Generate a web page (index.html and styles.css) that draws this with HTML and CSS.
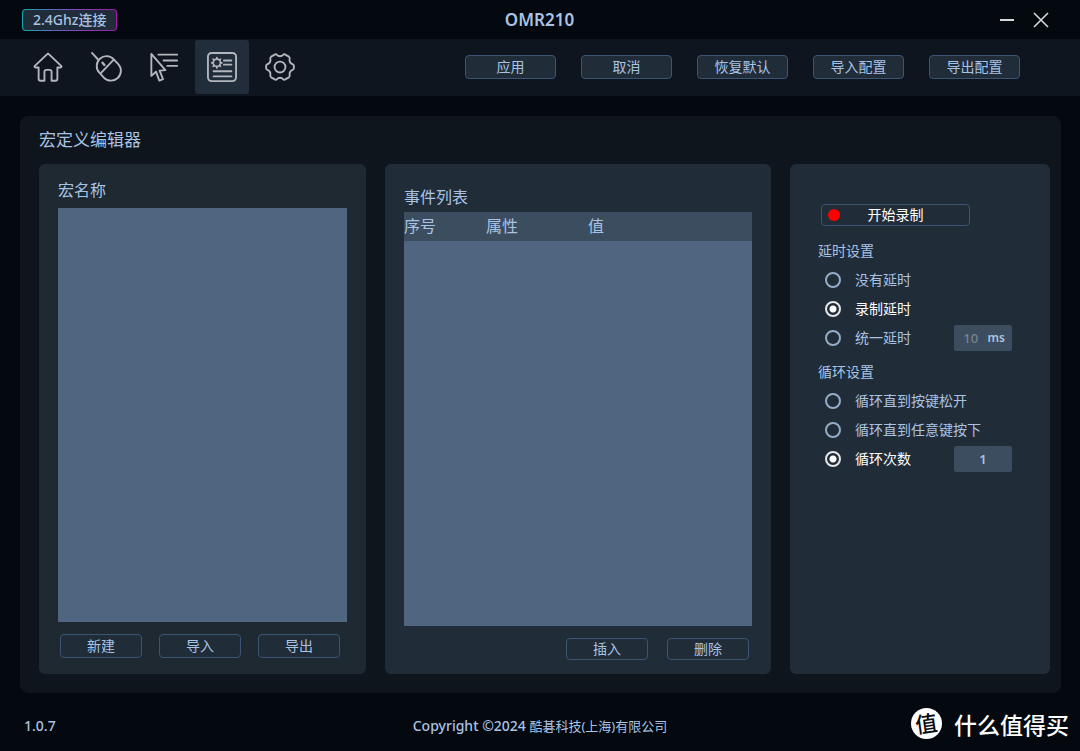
FILE: index.html
```html
<!DOCTYPE html>
<html lang="zh-CN">
<head>
<meta charset="utf-8">
<title>OMR210</title>
<link rel="stylesheet" href="styles.css">
</head>
<body>
<header class="titlebar">
  <div class="side"><span class="link-badge">2.4Ghz连接</span></div>
  <h1 class="product">OMR210</h1>
  <div class="side window-controls">
    <button class="window-button" type="button" aria-label="最小化"><svg width="16" height="16" viewBox="0 0 16 16"><path d="M1 8H15" stroke-width="2"/></svg></button>
    <button class="window-button" type="button" aria-label="关闭"><svg width="16" height="16" viewBox="0 0 16 16"><path d="M1 1 15 15M15 1 1 15" stroke-width="1.600"/></svg></button>
  </div>
</header>

<div class="toolbar">
  <nav class="tabs">
    <button class="tab" type="button" aria-label="主页"><svg width="30" height="30" viewBox="0 0 32 32"><path d="M16 1.500 2 14.800c-.8.900-.4 1.700.6 1.700H6v12c0 1.500.7 2.200 2.200 2.200h4V21c0-1.300.7-2 2-2h3.600c1.300 0 2 .7 2 2v9.700h4c1.500 0 2.200-.7 2.200-2.200v-12h3.400c1 0 1.400-.8.600-1.700Z"/></svg></button>
    <button class="tab" type="button" aria-label="鼠标"><svg width="30" height="30" viewBox="0 0 32 32"><path d="M1 1 7.500 8"/><rect x="8.500" y="3.500" width="21" height="28" rx="10.500" transform="rotate(-43 19 17.500)"/><path d="M10.500 22.500 24 8.500"/><path d="M12.300 11.500 14.300 13.800" stroke-width="2.600"/></svg></button>
    <button class="tab" type="button" aria-label="指针"><svg width="30" height="30" viewBox="0 0 32 32"><path d="M2.500 2v23.500l5-4.500 3.500 9.500 4-1.500-3.700-9.200 6.200-.5Z"/><path d="M10 2.800h20M15.500 9h14.500M19.500 14.800h10.500"/></svg></button>
    <button class="tab active" type="button" aria-label="宏定义" aria-current="page"><svg width="30" height="30" viewBox="0 0 32 32"><rect x="1" y="1" width="30" height="30" rx="4"/><circle cx="10.500" cy="11.500" r="3.900" stroke-width="1.800"/><path d="M10.500 6v1.500M10.500 15.500v1.500M5 11.500h1.500M14.500 11.500h1.500M6.600 7.600l1 1M13.400 14.400l1 1M14.400 7.600l-1 1M7.600 14.400l-1 1" stroke-width="1.800"/><path d="M18 9h8M18 13.500h8M7 20.500h19M7 26h19"/></svg></button>
    <button class="tab" type="button" aria-label="设置"><svg width="30" height="30" viewBox="0 0 32 32"><path d="M10 3c1-.8 2-.8 2.700.1 1.800 1.900 4.800 1.900 6.600 0C20 2.200 21 2.200 22 3l3.500 2c.7.500.9 1.200.8 2-.6 3.100 1 5.300 3.500 6.300.7.300 1 .8 1 1.700v2c0 .9-.3 1.400-1 1.700-2.500 1-4.100 3.200-3.500 6.300.1.800-.1 1.500-.8 2L22 29c-1 .8-2 .8-2.700-.1-1.800-1.900-4.800-1.900-6.600 0-.7.900-1.700.9-2.700.1L6.500 27c-.7-.5-.9-1.200-.8-2 .6-3.100-1-5.300-3.500-6.300-.7-.3-1-.8-1-1.700v-2c0-.9.300-1.400 1-1.700 2.500-1 4.100-3.200 3.500-6.300-.1-.8.100-1.500.8-2Z"/><circle cx="16" cy="16" r="5.800"/></svg></button>
  </nav>
  <div class="profile-actions">
    <button class="button" type="button">应用</button>
    <button class="button" type="button">取消</button>
    <button class="button" type="button">恢复默认</button>
    <button class="button" type="button">导入配置</button>
    <button class="button" type="button">导出配置</button>
  </div>
</div>

<main class="editor">
  <h2 class="editor-title">宏定义编辑器</h2>
  <div class="panels">
    <section class="panel macros">
      <h3 class="panel-title">宏名称</h3>
      <div class="list"></div>
      <div class="macro-actions">
        <button class="button" type="button">新建</button>
        <button class="button" type="button">导入</button>
        <button class="button" type="button">导出</button>
      </div>
    </section>

    <section class="panel events">
      <h3 class="panel-title">事件列表</h3>
      <div class="list">
        <table class="event-table">
          <thead><tr><th class="col-index">序号</th><th class="col-kind">属性</th><th>值</th></tr></thead>
        </table>
      </div>
      <div class="event-actions">
        <button class="button" type="button">插入</button>
        <button class="button" type="button">删除</button>
      </div>
    </section>

    <section class="panel options">
      <button class="button record" type="button"><span class="record-dot"></span>开始录制</button>
      <fieldset class="group">
        <legend class="group-title">延时设置</legend>
        <div class="row"><label class="choice"><input type="radio" name="delay">没有延时</label></div>
        <div class="row"><label class="choice"><input type="radio" name="delay" checked>录制延时</label></div>
        <div class="row">
          <label class="choice"><input type="radio" name="delay">统一延时</label>
          <span class="field"><input class="number" type="text" value="10" aria-label="统一延时" disabled><span class="unit">ms</span></span>
        </div>
      </fieldset>
      <fieldset class="group">
        <legend class="group-title">循环设置</legend>
        <div class="row"><label class="choice"><input type="radio" name="loop">循环直到按键松开</label></div>
        <div class="row"><label class="choice"><input type="radio" name="loop">循环直到任意键按下</label></div>
        <div class="row">
          <label class="choice"><input type="radio" name="loop" checked>循环次数</label>
          <span class="field"><input class="number" type="text" value="1" aria-label="循环次数"></span>
        </div>
      </fieldset>
    </section>
  </div>
</main>

<footer class="footer">
  <span class="version">1.0.7</span>
  <span>Copyright ©2024 <span class="company">酷碁科技(上海)有限公司</span></span>
  <div class="brand">
    <span class="brand-mark"><span class="brand-glyph">值</span></span>
    <span>什么值得买</span>
  </div>
</footer>
</body>
</html>
```
FILE: styles.css
```css
* { box-sizing: border-box; }

body {
  margin: 0;
  min-height: 100vh;
  display: flex;
  flex-direction: column;
  background: #04080f;
  color: #a9c3e3;
  font-family: "Noto Sans", "Noto Sans CJK SC", sans-serif;
  font-size: 14px;
  line-height: 20px;
}

h1, h2, h3 { margin: 0; font-weight: 400; }

button, input { font: inherit; color: inherit; }

svg {
  display: block;
  overflow: visible;
  fill: none;
  stroke: #b3b6bc;
  stroke-width: 2;
  stroke-linecap: round;
  stroke-linejoin: round;
}

.titlebar {
  display: grid;
  grid-template-columns: 1fr auto 1fr;
  align-items: center;
  height: 39px;
  padding: 0 23px 0 22px;
}

.side { display: flex; }

.link-badge {
  padding: 0 10px;
  border: 1px solid transparent;
  border-radius: 4px;
  background:
    linear-gradient(#202c3a, #202c3a) padding-box,
    linear-gradient(90deg, #16a5ac, #7a4fc0 50%, #a418a4) border-box;
  font-weight: 500;
}

.product {
  font-size: 17px;
  font-weight: 600;
  line-height: 24px;
}

.window-controls { justify-content: flex-end; gap: 2px; }

.window-button {
  padding: 8px;
  border: 0;
  background: none;
}

.window-button svg { stroke: #d5d7da; stroke-linecap: butt; }

.toolbar {
  display: flex;
  align-items: center;
  justify-content: space-between;
  height: 57px;
  padding: 0 60px 1px 21px;
  background: #0e151e;
}

.tabs { display: flex; gap: 4px; }

.tab {
  display: grid;
  place-items: center;
  width: 54px;
  height: 54px;
  padding: 0;
  border: 0;
  border-radius: 3px;
  background: none;
}

.tab.active { background: #212d3a; }

.profile-actions { display: flex; gap: 25px; }
.profile-actions .button { width: 91px; }

.button {
  height: 24px;
  padding: 0;
  border: 1px solid #3a5473;
  border-radius: 4px;
  background: #212c39;
  line-height: 20px;
}

.editor {
  flex: 1;
  display: flex;
  flex-direction: column;
  margin: 20px 19px 0 20px;
  padding: 12px 11px 19px 19px;
  border-radius: 8px;
  background: #0e151c;
}

.editor-title {
  margin-bottom: 12px;
  font-size: 17px;
  line-height: 24px;
}

.panels {
  flex: 1;
  display: grid;
  grid-template-columns: 327fr 386fr 260fr;
  gap: 19px;
}

.panel {
  display: flex;
  flex-direction: column;
  border-radius: 6px;
  background: #212c39;
}

.panel-title { font-size: 16px; line-height: 24px; }

.list { flex: 1; background: #4f6580; }

.macros { padding: 14px 19px 16px; background: #1e2932; }
.macros .panel-title { margin-bottom: 6px; }

.macro-actions { display: flex; gap: 17px; padding: 12px 2px 0; }
.macro-actions .button, .event-actions .button { width: 82px; }

.events { padding: 21px 19px 14px; }
.events .panel-title { margin-bottom: 3px; }

.event-table {
  width: 100%;
  border-collapse: collapse;
  table-layout: fixed;
  background: #3b4d5e;
  font-size: 16px;
  line-height: 29px;
  text-align: left;
}

.event-table th { padding: 0; font-weight: 400; }
.event-table .col-index { width: 82px; }
.event-table .col-kind { width: 102px; }

.event-actions {
  display: flex;
  justify-content: flex-end;
  gap: 19px;
  padding: 12px 3px 0 0;
}

.event-actions .button { height: 22px; }

.options { padding: 40px 38px 14px 28px; }

.record {
  display: grid;
  grid-template-columns: 24px 1fr 24px;
  align-items: center;
  width: 149px;
  height: 22px;
  margin: 0 0 10px 3px;
  color: #fff;
}

.record-dot {
  width: 12px;
  height: 12px;
  margin-left: 6px;
  border-radius: 50%;
  background: #f00;
}

.group { margin: 0 0 5px; padding: 0; border: 0; min-width: 0; }
.group-title { padding: 0; line-height: 29px; }

.row {
  display: flex;
  align-items: center;
  justify-content: space-between;
  height: 29px;
  padding-left: 7px;
}

.choice { display: flex; align-items: center; gap: 14px; }
.choice:has(:checked) { color: #fff; }

.choice input {
  appearance: none;
  width: 16px;
  height: 16px;
  margin: 0;
  border: 2px solid #93acc8;
  border-radius: 50%;
}

.choice input:checked {
  border-color: #e4e6e8;
  background: radial-gradient(circle, #fff 3px, transparent 4px);
}

.field {
  display: flex;
  align-items: center;
  width: 58px;
  height: 26px;
  border-radius: 2px;
  background: #3b4d5e;
}

.number {
  flex: 1;
  min-width: 0;
  padding: 0;
  border: 0;
  background: none;
  font-size: 13px;
  font-weight: 600;
  text-align: center;
}

.number:disabled { font-weight: 500; color: #77838d; }
.unit { padding-right: 7px; font-size: 12px; font-weight: 600; }

.footer {
  display: grid;
  grid-template-columns: 1fr auto 1fr;
  align-items: center;
  height: 58px;
  padding: 8px 11px 0;
  font-weight: 500;
}

.version { padding-left: 13px; }
.company { font-size: 13px; font-weight: 400; }

.brand {
  display: flex;
  align-items: center;
  justify-content: flex-end;
  gap: 12px;
  height: 32px;
  margin-bottom: 5px;
  color: #fff;
  font-family: "Noto Sans CJK SC", sans-serif;
  font-size: 23px;
  font-weight: 500;
  line-height: 32px;
}

.brand-mark {
  display: grid;
  place-items: center;
  width: 31px;
  height: 31px;
  padding-bottom: 3px;
  border-radius: 50%;
  background: #fff;
  color: #0a0d12;
  font-size: 22px;
  line-height: 28px;
}

.brand-glyph { transform: rotate(-8deg); }
```
